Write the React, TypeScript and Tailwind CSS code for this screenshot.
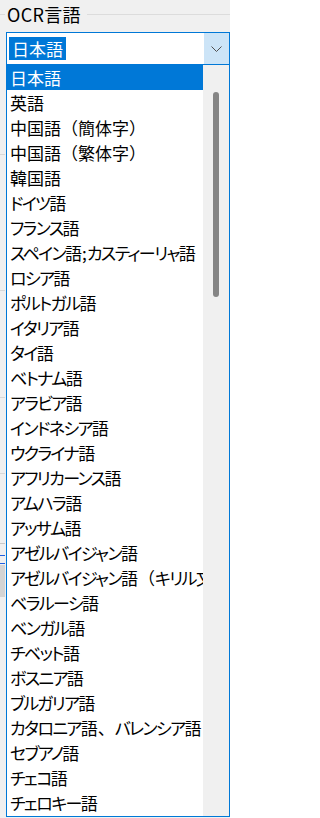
import React from "react";

const items = [
  "日本語",
  "英語",
  "中国語（簡体字）",
  "中国語（繁体字）",
  "韓国語",
  "ドイツ語",
  "フランス語",
  "スペイン語;カスティーリャ語",
  "ロシア語",
  "ポルトガル語",
  "イタリア語",
  "タイ語",
  "ベトナム語",
  "アラビア語",
  "インドネシア語",
  "ウクライナ語",
  "アフリカーンス語",
  "アムハラ語",
  "アッサム語",
  "アゼルバイジャン語",
  "アゼルバイジャン語（キリル文字）",
  "ベラルーシ語",
  "ベンガル語",
  "チベット語",
  "ボスニア語",
  "ブルガリア語",
  "カタロニア語、バレンシア語",
  "セブアノ語",
  "チェコ語",
  "チェロキー語",
];

function runs(t: string) {
  const out: { s: string; k: "kana" | "punct" | "other" }[] = [];
  for (const ch of t) {
    const k = /[\u3040-\u30ff]/.test(ch) ? "kana" : /[（）、]/.test(ch) ? "punct" : "other";
    const last = out[out.length - 1];
    if (last && last.k === k) last.s += ch;
    else out.push({ s: ch, k });
  }
  return out;
}

function Label({ t }: { t: string }) {
  return (
    <>
      {runs(t).map((r, i) =>
        r.k === "kana" ? (
          <span key={i} className="tracking-[-1.6px]">
            {r.s}
          </span>
        ) : r.k === "punct" ? (
          <span key={i} className="[font-feature-settings:normal]">
            {r.s}
          </span>
        ) : (
          <span key={i}>{r.s}</span>
        )
      )}
    </>
  );
}

export default function App() {
  return (
    <div className="relative w-[230px] h-[818px] overflow-hidden bg-[#f0f0f0] text-black font-['Noto_Sans_CJK_JP','Noto_Sans',sans-serif] [font-feature-settings:'palt']">
      {/* underlying window fragments on the left edge */}
      <div className="absolute left-0 top-[154px] w-[5px] h-px bg-[#d8d8d8]" />
      <div className="absolute left-0 top-[290px] w-[5px] h-px bg-[#d8d8d8]" />
      <div className="absolute left-0 top-[397px] w-[5px] h-px bg-[#d8d8d8]" />
      <div className="absolute left-0 top-[473px] w-[5px] h-px bg-[#d8d8d8]" />
      <div className="absolute left-0 top-[543px] w-[5px] h-px bg-[#c8c8c8]" />
      <div className="absolute left-0 top-[555px] w-[5px] h-px bg-[#2060e0]" />
      <div className="absolute left-0 top-[563px] w-[5px] h-px bg-[#2060e0]" />
      <div className="absolute left-0 top-[565px] w-[5px] h-[32px] bg-[#d4d4d4]" />

      {/* group label */}
      <div className="flex items-center h-[29px]">
        <div className="w-[5px] h-px bg-[#dcdcdc]" />
        <span className="px-[2px] text-[18px] leading-[29px] tracking-[0.3px]">OCR言語</span>
        <div className="flex-1 h-px bg-[#dcdcdc] ml-[4px]" />
      </div>

      {/* combobox */}
      <div className="ml-[6px] mt-[3px] w-[224px] h-[33px] flex border border-[#0078d7] bg-white">
        <div className="flex-1 flex items-center pl-[2px]">
          <span className="bg-[#0078d7] text-white text-[17px] leading-[23px] px-[3px]">日本語</span>
        </div>
        <div className="w-[25px] h-full bg-[#cce4f7] flex items-center justify-center">
          <svg width="11" height="6" viewBox="0 0 11 6" fill="none">
            <path d="M0.5 0.5 L5.5 5.5 L10.5 0.5" stroke="#505050" strokeWidth="1" />
          </svg>
        </div>
      </div>

      {/* dropdown list */}
      <div className="ml-[6px] w-[224px] h-[752px] flex border-x border-b border-[#0078d7] bg-white">
        <div className="w-[196px] flex flex-col overflow-hidden">
          {items.map((t, i) => (
            <div
              key={i}
              className={
                i === 0
                  ? "h-[25px] shrink-0 pl-[3px] text-[17px] leading-[25px] whitespace-nowrap bg-[#0078d7] text-white"
                  : "h-[25px] shrink-0 pl-[3px] text-[17px] leading-[25px] whitespace-nowrap"
              }
            >
              <Label t={t} />
            </div>
          ))}
        </div>
        <div className="flex-1 bg-[#f0f0f0] pt-[27px] pl-[10px]">
          <div className="w-[6px] h-[205px] rounded-full bg-[#858585]" />
        </div>
      </div>
    </div>
  );
}
